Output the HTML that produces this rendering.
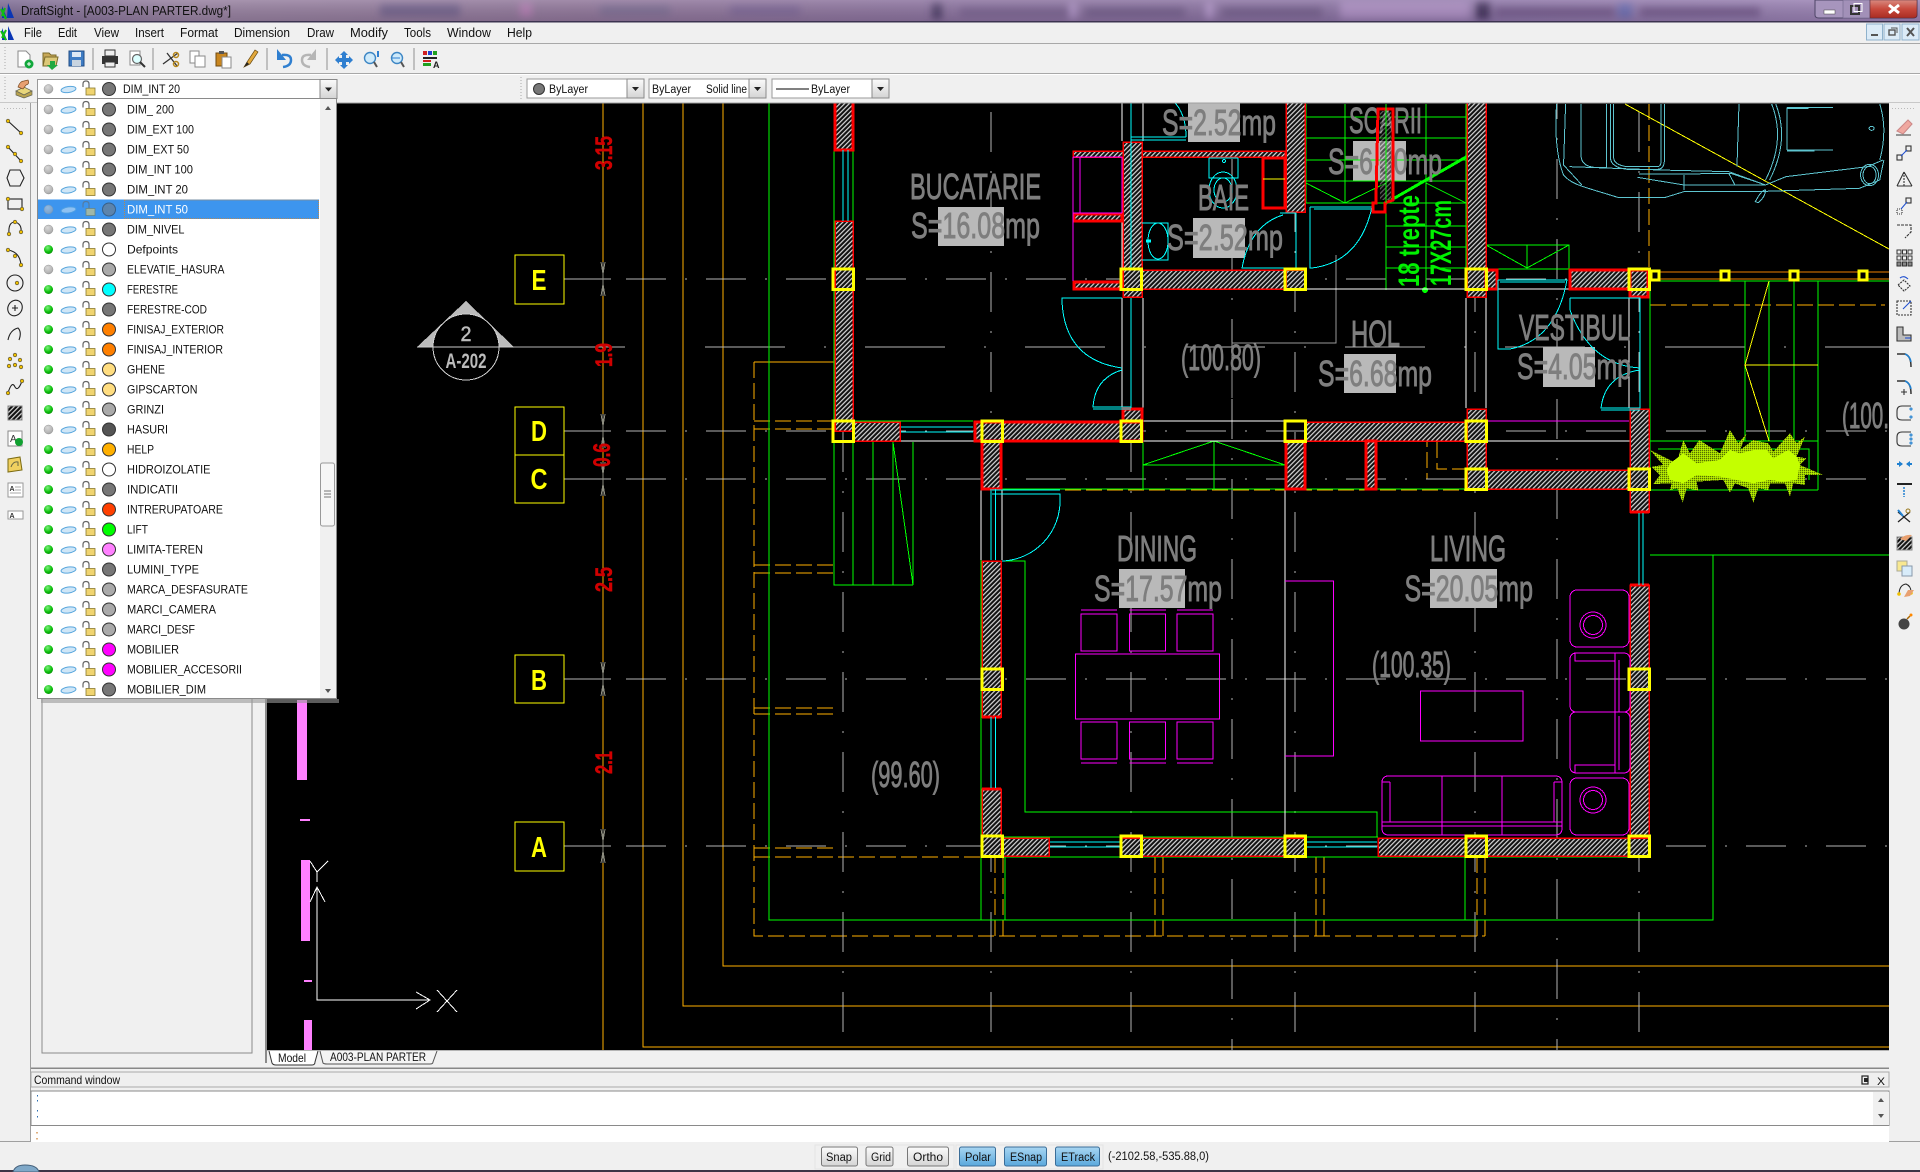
<!DOCTYPE html>
<html><head><meta charset="utf-8"><title>DraftSight</title>
<style>
html,body{margin:0;padding:0;background:#f0f0f0;overflow:hidden}
svg{display:block;position:absolute;left:0;top:0}
text{font-family:"Liberation Sans",sans-serif;white-space:pre}
.u{font-size:11.5px;fill:#111}
.g{font-size:36px;fill:#7e7e7e;stroke:#7e7e7e;stroke-width:.9}
.b{fill:#b9b9b9}
.w{fill:url(#h);stroke:#f00;stroke-width:1.5}
.W{fill:url(#h);stroke:#f00;stroke-width:3}
.c{stroke:#333;stroke-width:1}
.d{font-weight:bold;font-size:24px;fill:#d00000;stroke:#d00000;stroke-width:.5}
.ax{font-weight:bold;font-size:29px;fill:#ff0}
.n{fill:none}
.i{fill:none;stroke:#444;stroke-width:1.2}
.p{fill:#fff;stroke:#8a8a8a}
.y{fill:#f4c430;stroke:#7a6a10;stroke-width:.6}
.st{font-size:11.5px;fill:#111}
</style></head><body>
<svg width="1920" height="1172" viewBox="0 0 1920 1172" xmlns="http://www.w3.org/2000/svg">
<defs>
<filter id="bl6" x="-50%" y="-50%" width="200%" height="200%"><feGaussianBlur stdDeviation="4"/></filter>
<pattern id="h" width="3.3" height="3.3" patternUnits="userSpaceOnUse" patternTransform="rotate(45)"><rect width="3.3" height="3.3" fill="#111"/><line x1="0.6" y1="0" x2="0.6" y2="3.3" stroke="#d8d8d8" stroke-width="1.2"/></pattern>
<pattern id="chk" width="2" height="2" patternUnits="userSpaceOnUse"><rect width="2" height="2" fill="#c4ff00"/><rect width="1" height="1" fill="#000"/></pattern>
<linearGradient id="tb" x1="0" x2="1" y1="0" y2="0"><stop offset="0" stop-color="#7c6a93"/><stop offset=".1" stop-color="#96809f"/><stop offset=".3" stop-color="#8f7599"/><stop offset=".5" stop-color="#8a719e"/><stop offset=".75" stop-color="#8a72a4"/><stop offset="1" stop-color="#9a82b4"/></linearGradient>
<linearGradient id="tv" x1="0" x2="0" y1="0" y2="1"><stop offset="0" stop-color="#fff" stop-opacity=".16"/><stop offset="1" stop-color="#000" stop-opacity=".1"/></linearGradient>
<linearGradient id="cl" x1="0" x2="0" y1="0" y2="1"><stop offset="0" stop-color="#d98a80"/><stop offset=".5" stop-color="#c8493c"/><stop offset="1" stop-color="#a92c22"/></linearGradient>
<linearGradient id="bl" x1="0" x2="0" y1="0" y2="1"><stop offset="0" stop-color="#a9d6f2"/><stop offset="1" stop-color="#5aa8dc"/></linearGradient>
<linearGradient id="bg" x1="0" x2="0" y1="0" y2="1"><stop offset="0" stop-color="#fbfbfb"/><stop offset="1" stop-color="#d4d4d4"/></linearGradient>
<radialGradient id="gn" cx=".4" cy=".3" r=".8"><stop offset="0" stop-color="#7cf07c"/><stop offset=".6" stop-color="#0cbf0c"/><stop offset="1" stop-color="#067f06"/></radialGradient>
<radialGradient id="gy" cx=".4" cy=".3" r=".8"><stop offset="0" stop-color="#d8d8d8"/><stop offset=".7" stop-color="#b4b4b4"/><stop offset="1" stop-color="#8c8c8c"/></radialGradient>
<g id="ys"><rect x="-10" y="-10" width="20.5" height="20.5" fill="none" stroke="#ff0" stroke-width="3"/></g>
<g id="ic"><ellipse cx="68.5" cy="0.5" rx="7.500" ry="3" transform="rotate(-8 68.5 .5)" fill="#cfe6f7" stroke="#5aa7dd"/><path d="M83 -2V-5Q83 -8 86 -8Q89 -8 89 -5V-1" fill="none" stroke="#666" stroke-width="1.200"/><rect x="86" y="-1" width="9" height="7" fill="#f0d470" stroke="#8a7a30" stroke-width=".8"/></g>
<g id="on"><circle cx="48.500" r="4.500" fill="url(#gn)"/></g>
<g id="of"><circle cx="48.500" r="4.500" fill="url(#gy)" stroke="#999" stroke-width=".5"/></g>
<path id="tk" d="M601 -17L603 -5L605 -17M603 -17V17M601 17L603 5L605 17" fill="none" stroke="#8d8d80" stroke-width="1"/>
<symbol id="dn" overflow="visible"><rect width="17" height="19" fill="url(#bg)" stroke="#8a8a8a"/><path d="M5 8H12L8.500 12Z" fill="#222"/></symbol>
</defs>

<!-- CAD canvas -->
<rect x="267" y="103" width="1622" height="948" fill="#000"/>
<g shape-rendering="crispEdges">

<!-- orange large frames -->
<g fill="none" stroke="#ffb000" stroke-width="1">
<path d="M603 90V1050"/>
<path d="M643 90V1047H1889M683 90V1006H1889M723 90V966H1889"/>
</g>
<!-- dashed orange -->
<g fill="none" stroke="#ffb000" stroke-width="1" stroke-dasharray="16 5">
<path d="M754 362V936H1485M754 421H834M754 429H834M754 565H834M754 573H834M754 708H834M754 714H834M754 848H834M754 857H982"/>
<path d="M995 857V936M1003 857V936M1155 857V936M1163 857V936M1316 857V936M1324 857V936M1477 857V936M1485 857V936"/>
<path d="M1649 104V269M1650 305H1885M1002 490H1466"/>
<path d="M1427 431V479H1476M1427 431H1476M1437 442V469H1466"/>
</g>
<path d="M754 362H834" stroke="#ffb000" fill="none"/>

<!-- grid lines -->
<g fill="none" stroke="#b4b4b4" stroke-width="1">
<path d="M564 279H611M564 431H611M564 479H611M564 679H611M564 846H611"/>
<g stroke-dasharray="40 19 2 19">
<path d="M626 279H1889M626 431H1889M626 479H1889M626 679H1889M626 846H1889"/>
<path d="M843 32V1050M991 32V1050M1131 32V1050M1295 32V1050M1475 32V1050M1639 32V1050M1232 -1V1050M1557 -1V1050"/>
</g>
<path d="M705 347H1889" stroke-dasharray="80 39 2 39"/>
<path d="M417 347H625"/>
<path d="M1232 398V343H1336V255" stroke="#999"/>
</g>
<use href="#tk" y="279"/><use href="#tk" y="431"/><use href="#tk" y="479"/><use href="#tk" y="679"/><use href="#tk" y="846"/>

<!-- Axis boxes -->
<g fill="none" stroke="#ff0" stroke-width="1">
<rect x="515" y="255" width="49" height="49"/><rect x="515" y="407" width="49" height="48"/><rect x="515" y="455" width="49" height="48"/><rect x="515" y="655" width="49" height="48"/><rect x="515" y="822" width="49" height="49"/>
</g>
<text class="ax" x="539" y="290" text-anchor="middle" textLength="15" lengthAdjust="spacingAndGlyphs">E</text>
<text class="ax" x="539" y="441" text-anchor="middle" textLength="16" lengthAdjust="spacingAndGlyphs">D</text>
<text class="ax" x="539" y="489" text-anchor="middle" textLength="17" lengthAdjust="spacingAndGlyphs">C</text>
<text class="ax" x="539" y="690" text-anchor="middle" textLength="16" lengthAdjust="spacingAndGlyphs">B</text>
<text class="ax" x="539" y="857" text-anchor="middle" textLength="16" lengthAdjust="spacingAndGlyphs">A</text>

<!-- red dims -->
<text class="d" transform="translate(612,170) rotate(-90)" textLength="34" lengthAdjust="spacingAndGlyphs">3.15</text>
<text class="d" transform="translate(612,367) rotate(-90)" textLength="24" lengthAdjust="spacingAndGlyphs">1.9</text>
<text class="d" transform="translate(610,467) rotate(-90)" textLength="24" lengthAdjust="spacingAndGlyphs">0.6</text>
<text class="d" transform="translate(612,592) rotate(-90)" textLength="25" lengthAdjust="spacingAndGlyphs">2.5</text>
<text class="d" transform="translate(612,774) rotate(-90)" textLength="23" lengthAdjust="spacingAndGlyphs">2.1</text>

<!-- section marker -->
<path d="M466 301L417 347H514Z" fill="#bbb"/>
<circle cx="466" cy="347" r="33" fill="#000" stroke="#ccc" stroke-width="1"/>
<path d="M417 347H514" stroke="#ccc" stroke-width="1"/>
<text x="466" y="341" text-anchor="middle" font-size="21" fill="#bbb" stroke="#bbb" stroke-width=".5" textLength="11" lengthAdjust="spacingAndGlyphs">2</text>
<text x="466" y="368" text-anchor="middle" font-size="21" font-weight="bold" fill="#bbb" textLength="41" lengthAdjust="spacingAndGlyphs">A-202</text>

<!-- gray boxes -->
<g class="b">
<rect x="938" y="207" width="66" height="39"/><rect x="1188" y="100" width="52" height="42"/><rect x="1193" y="218" width="52" height="40"/>
<rect x="1353" y="141" width="53" height="40"/><rect x="1344" y="354" width="52" height="39"/><rect x="1543" y="347" width="52" height="40"/>
<rect x="1119" y="569" width="66" height="39"/><rect x="1430" y="569" width="67" height="39"/>
</g>

<!-- green lines -->
<g fill="none" stroke="#00ff00" stroke-width="1">
<path d="M769 90V920H1713V555M1650 555H1889"/>
<path d="M834 90V585H913M853 150V221M853 442V585M873 442V585M893 442V585M913 442V585M893 442L913 585"/>
<path d="M853 421H973M853 441H973"/>
<path d="M981 489H1650M981 489V857M1002 489V560M1005 857V920M1465 857V920M981 857V920"/>
<path d="M1002 561H1025V812H1377V837"/>
<path d="M981 837H1378M981 857H1650"/>
<path d="M1143 465L1214 441L1285 465ZM1214 441V490"/>
<path d="M1143 441V490"/>
<path d="M1306 117H1466M1306 138H1466M1306 160H1466M1306 181H1466M1306 203H1466M1345 104V203M1386 104V290M1426 104V203M1466 104V290M1306 104V203"/>
<path d="M1386 226H1466M1386 247H1466M1386 268H1466M1386 289H1466M1426 203V290"/>
<path d="M1306 183L1345 203L1386 183M1426 183L1466 203"/>
<path d="M1486 245H1569V269M1486 245L1527 268L1569 245M1527 245V268M1486 245V269M1486 269H1569"/>
<path d="M1650 281V490M1650 281H1889M1745 281V441M1769 281V441M1794 281V441M1818 281V490M1650 441H1818M1650 490H1818M1658 449H1809V480"/>
</g>
<path d="M1386 203L1466 157" stroke="#00ff00" stroke-width="3" fill="none"/>
<circle cx="1425" cy="290" r="3" fill="#00ff00"/>
<text transform="translate(1419,287) rotate(-90)" font-size="30" font-weight="bold" fill="#00f000" textLength="92" lengthAdjust="spacingAndGlyphs">18 trepte</text>
<text transform="translate(1451,286) rotate(-90)" font-size="30" font-weight="bold" fill="#00f000" textLength="86" lengthAdjust="spacingAndGlyphs">17X27cm</text>

<!-- yellow thin -->
<g fill="none" stroke="#ff0" stroke-width="1">
<path d="M1625 104L1889 249"/>
<path d="M1769 281L1745 365L1769 441M1745 365H1818"/>
<path d="M1263 179H1285"/>
</g>
<g fill="none" stroke="#f08000" stroke-width="1"><path d="M1650 272H1889M1650 279H1889"/></g>

<!-- white lines -->
<g fill="none" stroke="#fff" stroke-width="1">
<path d="M1122 90V141M1143 90V141M1122 298V408M1143 298V408M1466 298V408M1486 298V408M1629 298V408"/>
<path d="M834 441H1630M1143 421H1285M1306 289H1466M1486 289H1569"/>
<path d="M1285 490V837M981 490V560M1002 490V560M1122 157V269"/>
</g>
<path d="M1486 421H1629" stroke="#f0f" stroke-width="1" fill="none"/>

<!-- walls -->
<rect class="W" x="835" y="90" width="18" height="60"/>
<rect class="w" x="835" y="221" width="18" height="210"/>
<rect class="w" x="853" y="422" width="47" height="19"/>
<rect class="W" x="975" y="422" width="167" height="19"/>
<rect class="W" x="982" y="441" width="19" height="48"/>
<rect class="w" x="1073" y="151" width="212" height="6"/>
<rect class="w" x="1123" y="142" width="19" height="155"/>
<rect class="W" x="1074" y="214" width="48" height="7"/>
<rect class="W" x="1074" y="282" width="48" height="7"/>
<rect class="w" x="1142" y="270" width="144" height="19"/>
<rect class="W" x="1123" y="409" width="19" height="13"/>
<rect x="1263" y="158" width="22" height="50" fill="#000" stroke="#f00" stroke-width="3"/>
<path d="M1263 179H1285" stroke="#ff0"/>
<rect class="w" x="1286" y="90" width="19" height="122"/>
<rect class="w" x="1286" y="270" width="19" height="19"/>
<rect class="W" x="1286" y="441" width="19" height="48"/>
<rect class="w" x="1306" y="422" width="160" height="19"/>
<rect class="W" x="1366" y="441" width="10" height="48"/>
<rect class="w" x="1467" y="90" width="19" height="207"/>
<rect class="w" x="1467" y="409" width="19" height="80"/>
<rect class="W" x="1486" y="270" width="11" height="19"/>
<rect class="W" x="1570" y="270" width="78" height="19"/>
<rect class="W" x="1630" y="270" width="18" height="27"/>
<rect class="w" x="1630" y="409" width="19" height="103"/>
<rect class="w" x="1630" y="585" width="19" height="271"/>
<rect class="w" x="1486" y="470" width="144" height="19"/>
<rect class="w" x="982" y="561" width="19" height="156"/>
<rect class="w" x="982" y="789" width="19" height="68"/>
<rect class="w" x="1002" y="838" width="47" height="18"/>
<rect class="w" x="1121" y="838" width="185" height="18"/>
<rect class="w" x="1378" y="838" width="271" height="18"/>
<path d="M982 717H1001M982 789H1001M1630 512H1649M1630 585H1649" stroke="#f00" stroke-width="3"/>

<!-- magenta kitchen -->
<path d="M1073 157V281M1080 157V213M1073 157H1122M1073 213H1122" stroke="#f0f" fill="none" stroke-width="1"/>
<path d="M1122 157V213" stroke="#f0f"/>

<!-- cyan -->
<g fill="none" stroke="#0ff" stroke-width="1">
<path d="M843 150V221M848 150V221M901 427H973M901 432H973"/>
<path d="M1050 842H1121M1050 847H1121M1306 842H1377M1306 847H1377M991 717V788M995.500 717V788M991 489V560M995.500 489V560M1639 513V585M1643 513V585"/>
<path d="M992 490H1060M992 494H1060V500A60 60 0 0 1 1002 561"/>
<path d="M1131 90V269M1122 298H1062V302Q1065 360 1122 368M1131 298V408M1122 370Q1095 378 1093 407H1131M1093 409H1131"/>
<path d="M1131 137H1186M1131 140H1186M1186 137Q1186 112 1172 100"/>
<path d="M1209 158V178H1238V158M1209 158H1238"/>
<ellipse cx="1223" cy="190" rx="14" ry="18"/><ellipse cx="1223" cy="190" rx="9" ry="12"/><circle cx="1224" cy="161" r="1.500"/>
<path d="M1142 223H1168V260H1142"/><ellipse cx="1158" cy="241" rx="10" ry="18"/><path d="M1146 241H1151" stroke-width="3"/>
<path d="M1283 215Q1250 225 1242 268H1283"/>
<path d="M1310 207H1372Q1360 262 1312 268H1310V207M1314 209H1372"/>
<path d="M1280 213H1296V268H1280"/>
<path d="M1498 280H1567Q1556 340 1510 349H1498V280M1500 282H1565"/>
<path d="M1570 298H1640V408H1601Q1605 375 1640 370M1570 298V310Q1590 365 1640 368M1601 410H1640"/>
</g>

<!-- car -->
<g transform="translate(1280,90) scale(.408,.3333)" fill="none" stroke="#5ec5d0">
<path vector-effect="non-scaling-stroke" d="M678 42C672 130 680 210 695 255C715 285 745 290 830 323L945 322L990 305L1165 305L1420 295L1470 270L1480 210"/>
<path vector-effect="non-scaling-stroke" d="M700 42L695 225L740 285"/>
<path vector-effect="non-scaling-stroke" d="M738 42V200Q740 228 770 232H800V42"/>
<path vector-effect="non-scaling-stroke" d="M810 42V205Q812 232 850 238H925Q940 238 942 215V42M818 42V205Q820 225 850 230H925Q933 230 934 215V42"/>
<path vector-effect="non-scaling-stroke" d="M710 230L930 240L1100 245L1190 285"/>
<path vector-effect="non-scaling-stroke" d="M880 252H990L1105 250L1190 285L1240 260L1440 230L1478 210"/>
<path vector-effect="non-scaling-stroke" d="M876 262L990 285H1190M990 255V300M1100 250L1115 285"/>
<path vector-effect="non-scaling-stroke" d="M1125 42L1120 230M1205 42Q1240 150 1190 270M1215 42Q1250 150 1200 270"/>
<path vector-effect="non-scaling-stroke" d="M1243 52H1355M1243 55H1295M1243 180H1355M1243 183H1310M1243 52V180"/>
<ellipse vector-effect="non-scaling-stroke" cx="1445" cy="255" rx="22" ry="32"/><ellipse vector-effect="non-scaling-stroke" cx="1445" cy="255" rx="16" ry="26"/>
<path vector-effect="non-scaling-stroke" d="M1470 42Q1490 120 1470 210"/>
<path vector-effect="non-scaling-stroke" d="M1165 335Q1180 300 1190 300Q1190 320 1172 338Z"/>
<circle vector-effect="non-scaling-stroke" cx="1450" cy="115" r="6"/>
</g>

<!-- magenta furniture -->
<g fill="none" stroke="#f0f" stroke-width="1">
<path d="M1081 610H1117M1129.500 610H1166M1177 610H1213M1081 763H1117M1129.500 763H1166M1177 763H1213"/>
<rect x="1081" y="614" width="36" height="37"/><rect x="1129.500" y="614" width="36" height="37"/><rect x="1177" y="614" width="36" height="37"/>
<rect x="1075.500" y="654" width="144" height="65"/>
<rect x="1081" y="722" width="36" height="37"/><rect x="1129.500" y="722" width="36" height="37"/><rect x="1177" y="722" width="36" height="37"/>
<path d="M1285 581H1333.500V756H1285"/>
<rect x="1420.500" y="691" width="102.500" height="50"/>
<rect x="1570" y="590" width="59" height="57" rx="7"/><circle cx="1593" cy="625" r="13"/><circle cx="1593" cy="625" r="9.500"/>
<rect x="1570" y="778" width="59" height="57" rx="7"/><circle cx="1593" cy="800" r="13"/><circle cx="1593" cy="800" r="9.500"/>
<rect x="1570" y="653" width="60" height="59" rx="6"/><rect x="1570" y="712" width="60" height="61" rx="6"/>
<path d="M1575 653V661H1615V653M1575 773V765H1615V773M1615 653V773M1619 660V712M1619 716V770"/>
<rect x="1382" y="776" width="180" height="59" rx="6"/>
<path d="M1442 776V835M1502 776V835M1382 822H1562M1382 826H1562M1390 782V822M1554 782V822M1382 782H1390M1554 782H1562"/>
</g>

<!-- room text -->
<text class="g" x="910" y="199" textLength="131" lengthAdjust="spacingAndGlyphs">BUCATARIE</text>
<text class="g" x="911" y="238" textLength="129" lengthAdjust="spacingAndGlyphs">S=16.08mp</text>
<text class="g" x="1162" y="135" textLength="114" lengthAdjust="spacingAndGlyphs">S=2.52mp</text>
<text class="g" x="1198" y="210" textLength="51" lengthAdjust="spacingAndGlyphs">BAIE</text>
<text class="g" x="1167" y="250" textLength="116" lengthAdjust="spacingAndGlyphs">S=2.52mp</text>
<text class="g" x="1181" y="370" textLength="80" lengthAdjust="spacingAndGlyphs">(100.80)</text>
<text class="g" x="1349" y="133" textLength="73" lengthAdjust="spacingAndGlyphs">SCARII</text>
<text class="g" x="1328" y="174" textLength="114" lengthAdjust="spacingAndGlyphs">S=6.30mp</text>
<text class="g" x="1351" y="346" textLength="49" lengthAdjust="spacingAndGlyphs">HOL</text>
<text class="g" x="1318" y="386" textLength="114" lengthAdjust="spacingAndGlyphs">S=6.68mp</text>
<text class="g" x="1519" y="340" textLength="111" lengthAdjust="spacingAndGlyphs">VESTIBUL</text>
<text class="g" x="1517" y="379" textLength="114" lengthAdjust="spacingAndGlyphs">S=4.05mp</text>
<text class="g" x="1842" y="428" textLength="47" lengthAdjust="spacingAndGlyphs">(100.</text>
<text class="g" x="1117" y="561" textLength="80" lengthAdjust="spacingAndGlyphs">DINING</text>
<text class="g" x="1094" y="601" textLength="128" lengthAdjust="spacingAndGlyphs">S=17.57mp</text>
<text class="g" x="1430" y="561" textLength="76" lengthAdjust="spacingAndGlyphs">LIVING</text>
<text class="g" x="1404.500" y="601" textLength="128.500" lengthAdjust="spacingAndGlyphs">S=20.05mp</text>
<text class="g" x="1372" y="677" textLength="79" lengthAdjust="spacingAndGlyphs">(100.35)</text>
<text class="g" x="871" y="787" textLength="69" lengthAdjust="spacingAndGlyphs">(99.60)</text>

<!-- red stair column over text -->
<path d="M1378 109H1393V200L1385 203V212H1373V203H1376V200Z" fill="none" stroke="#f00" stroke-width="3"/>
<path d="M1380 111H1391V200H1380Z" fill="url(#h)" opacity=".45"/>
<path d="M1386 104V203" stroke="#00ff00"/>

<!-- yellow squares -->
<use href="#ys" x="843" y="279"/><use href="#ys" x="1131" y="279"/><use href="#ys" x="1295" y="279"/><use href="#ys" x="1476" y="279"/><use href="#ys" x="1639" y="279"/>
<use href="#ys" x="843" y="431"/><use href="#ys" x="992" y="431"/><use href="#ys" x="1131" y="431"/><use href="#ys" x="1295" y="431"/><use href="#ys" x="1476" y="431"/>
<use href="#ys" x="1476" y="479"/><use href="#ys" x="1639" y="479"/><use href="#ys" x="992" y="679"/><use href="#ys" x="1639" y="679"/>
<use href="#ys" x="992" y="846"/><use href="#ys" x="1131" y="846"/><use href="#ys" x="1295" y="846"/><use href="#ys" x="1476" y="846"/><use href="#ys" x="1639" y="846"/>
<g fill="#000" stroke="#ff0" stroke-width="3"><rect x="1651" y="271" width="8" height="9"/><rect x="1721" y="271" width="8" height="9"/><rect x="1790" y="271" width="8" height="9"/><rect x="1859" y="271" width="8" height="9"/></g>

<!-- plants -->
<g transform="translate(1640,420) scale(.3333)">
<polygon fill="url(#chk)" points="30,90 110,130 130,60 150,100 178,60 240,100 270,30 295,70 320,40 300,90 340,60 385,70 400,95 450,40 470,70 495,50 470,110 500,115 480,135 550,165 495,165 495,195 460,190 450,230 435,190 390,190 385,210 355,205 340,248 325,205 285,190 270,218 250,180 170,185 175,212 140,205 128,248 112,205 90,210 95,190 40,192 60,165 35,140 70,135"/>
<polygon fill="#c4ff00" points="90,130 130,100 170,130 240,120 270,90 300,100 340,90 380,90 400,115 445,90 470,110 480,135 470,180 430,185 390,180 340,190 290,180 240,170 170,165 130,190 90,180 80,150"/>
</g>

<!-- pink limit lines -->
<g fill="#ff80ff">
<rect x="297" y="700" width="10" height="80"/><rect x="300" y="819" width="10" height="2"/><rect x="301" y="860" width="9" height="81"/><rect x="304" y="980" width="8" height="2"/><rect x="304" y="1020" width="8" height="30"/>
</g>
<!-- UCS -->
<g fill="none" stroke="#fff" stroke-width="1">
<path d="M317 887V1000H430M310 902L317 887L325 902M416 992L430 1000L416 1009"/>
<path d="M437 990L457 1012M457 990L437 1012M310 861L317 872L328 861M317 872V882"/>
</g>
</g>

<!-- ====== UI chrome ====== -->
<rect x="0" y="0" width="1920" height="22" fill="url(#tb)"/>
<g filter="url(#bl6)">
<rect x="380" y="4" width="80" height="12" fill="#6f5f8a"/><rect x="520" y="3" width="12" height="14" fill="#b07ab0"/>
<rect x="600" y="5" width="70" height="10" fill="#7a6a92"/><rect x="730" y="5" width="70" height="10" fill="#7a6494"/>
<rect x="932" y="3" width="10" height="16" fill="#4c3a66"/><rect x="960" y="7" width="110" height="9" fill="#775f8e"/>
<rect x="1070" y="3" width="6" height="16" fill="#b79ad0"/><rect x="1085" y="7" width="100" height="9" fill="#705a88"/>
<rect x="1206" y="3" width="7" height="16" fill="#b79ad0"/><rect x="1222" y="7" width="100" height="9" fill="#705a88"/>
<rect x="1340" y="2" width="130" height="17" fill="#ab8cc2"/>
<rect x="1476" y="2" width="14" height="17" fill="#3f2f5a"/><rect x="1495" y="7" width="120" height="9" fill="#6f5488"/>
<rect x="1618" y="3" width="14" height="15" fill="#6a6ab0"/><rect x="1640" y="7" width="120" height="9" fill="#6f5488"/>
</g>
<rect x="0" y="0" width="1920" height="21" fill="url(#tv)"/>
<rect x="0" y="21" width="1920" height="1.500" fill="#3c3350"/>
<path d="M2 6L7 18H2ZM8 3L14 18H7Z" fill="#0a35b5"/><path d="M1 9L6 19M5 8L2 16" stroke="#10c010" stroke-width="2" fill="none"/>
<text x="21" y="15" font-size="12.500" fill="#111" textLength="210" lengthAdjust="spacingAndGlyphs">DraftSight - [A003-PLAN PARTER.dwg*]</text>
<g>
<path d="M1815 0H1917V15Q1917 18 1913 18H1819Q1815 18 1815 15Z" fill="#a795bd" stroke="#4e4566" stroke-width="1"/>
<rect x="1843" y="0" width="27" height="18" fill="#a290b8" stroke="#6f6688" stroke-width=".6"/>
<path d="M1870 0H1917V15Q1917 18 1913 18H1870Z" fill="url(#cl)" stroke="#5a2a3a" stroke-width=".6"/>
<rect x="1824" y="10" width="11" height="4" fill="#fff" stroke="#444" stroke-width=".5"/>
<rect x="1851" y="6" width="8" height="8" fill="none" stroke="#333" stroke-width="2"/><rect x="1854" y="3.500" width="8" height="8" fill="none" stroke="#fff" stroke-width="1"/>
<path d="M1889 5L1899 13M1899 5L1889 13" stroke="#fff" stroke-width="3"/>
</g>

<!-- menu row -->
<rect x="0" y="22.500" width="1920" height="21" fill="#f0f0f0"/>
<rect x="0" y="43" width="1920" height="1" fill="#a8a8a8"/>
<path d="M2 28L7 40H2ZM8 26L14 40H8Z" fill="#0a35b5"/><path d="M1 31L6 40M6 30L2 38" stroke="#10c010" stroke-width="2" fill="none"/>
<g font-size="12.500" fill="#111">
<text x="24" y="37" textLength="18" lengthAdjust="spacingAndGlyphs">File</text><text x="58" y="37" textLength="19" lengthAdjust="spacingAndGlyphs">Edit</text><text x="94" y="37" textLength="25" lengthAdjust="spacingAndGlyphs">View</text><text x="135" y="37" textLength="29" lengthAdjust="spacingAndGlyphs">Insert</text><text x="180" y="37" textLength="38" lengthAdjust="spacingAndGlyphs">Format</text><text x="234" y="37" textLength="56" lengthAdjust="spacingAndGlyphs">Dimension</text><text x="307" y="37" textLength="27" lengthAdjust="spacingAndGlyphs">Draw</text><text x="350" y="37" textLength="38" lengthAdjust="spacingAndGlyphs">Modify</text><text x="404" y="37" textLength="27" lengthAdjust="spacingAndGlyphs">Tools</text><text x="447" y="37" textLength="44" lengthAdjust="spacingAndGlyphs">Window</text><text x="507" y="37" textLength="25" lengthAdjust="spacingAndGlyphs">Help</text>
</g>
<g fill="#dcebf7" stroke="#8fb2cc"><rect x="1866.500" y="24" width="16" height="16"/><rect x="1884" y="24" width="16" height="16"/><rect x="1902" y="24" width="17" height="16"/></g>
<path d="M1871 35H1878" stroke="#555" stroke-width="2"/><rect x="1889" y="30" width="6" height="5" fill="none" stroke="#555" stroke-width="1.400"/><path d="M1891 28H1897V33" fill="none" stroke="#555"/><path d="M1907 28L1914 36M1914 28L1907 36" stroke="#555" stroke-width="2"/>

<!-- toolbar rows -->
<rect x="0" y="44" width="1920" height="59" fill="#f0f0f0"/>
<rect x="0" y="73" width="1920" height="1" fill="#a8a8a8"/><rect x="0" y="74" width="1920" height="1" fill="#fff"/>
<rect x="0" y="102.500" width="1920" height="1" fill="#a0a0a0"/>
<path d="M5 47V71M5 77V101M521 77V101" stroke="#aaa" stroke-dasharray="1 2" fill="none"/>
<path d="M93 48V70M153 48V70M267 48V70M327 48V70M414 48V70" stroke="#909090"/>
<!-- new -->
<path class="p" d="M18 51H26L30 55V67H18Z"/><circle cx="29" cy="64" r="4.500" fill="#12a83c"/><path d="M27 64H31M29 62V66" stroke="#fff"/>
<!-- open -->
<path d="M43 53H49L51 55H56V66H43Z" fill="#c8a858" stroke="#7a6a2a"/><path d="M45 57H58L56 66H43Z" fill="#dcc878" stroke="#7a6a2a"/><path d="M50 61H55V65H58L52 70L47 65H50Z" fill="#20a840"/>
<!-- save -->
<rect x="69" y="51" width="15" height="15" fill="#3e7cc4" stroke="#204c84"/><rect x="72" y="52" width="9" height="5" fill="#dce8f5"/><rect x="72" y="60" width="9" height="6" fill="#c8d4e0"/>
<!-- print -->
<rect x="105" y="50" width="10" height="6" fill="#eee" stroke="#333"/><rect x="102" y="56" width="16" height="8" fill="#333"/><rect x="105" y="62" width="10" height="5" fill="#eee" stroke="#333"/>
<!-- preview -->
<path class="p" d="M130 51H140V65H130Z"/><circle cx="137" cy="59" r="4.500" fill="#dff" stroke="#666" stroke-width="1.200"/><path d="M140 62L145 67" stroke="#333" stroke-width="2"/>
<!-- cut -->
<path d="M163 64L178 53M177 66L167 53" stroke="#333" stroke-width="1.300" fill="none"/><circle cx="176" cy="55" r="2.500" fill="none" stroke="#b8881a" stroke-width="1.500"/><circle cx="176" cy="64" r="2.500" fill="none" stroke="#b8881a" stroke-width="1.500"/>
<!-- copy -->
<rect class="p" x="190" y="51" width="9" height="12"/><rect class="p" x="195" y="56" width="10" height="11"/>
<!-- paste -->
<rect x="216" y="53" width="11" height="13" fill="#c9861f" stroke="#6f4a10"/><rect x="219" y="51" width="5" height="3" fill="#555"/><rect class="p" x="222" y="57" width="9" height="11"/>
<!-- brush -->
<path d="M244 67L247 62L255 50L258 52L250 64Z" fill="#e2a83c" stroke="#6a4a10" stroke-width=".7"/><path d="M244 67L247 62L249 64Z" fill="#222"/>
<!-- undo -->
<path d="M282 55Q291 54 291 60Q291 66 283 67" fill="none" stroke="#2f7fd0" stroke-width="2.500"/><path d="M277 49V60H286Z" fill="#2f7fd0"/>
<!-- redo -->
<path d="M311 55Q302 54 302 60Q302 66 310 67" fill="none" stroke="#b5b5b5" stroke-width="2.500"/><path d="M316 49V60H307Z" fill="#b5b5b5"/>
<!-- pan -->
<path d="M344 51L348 55H346V58H349V56L353 60L349 64V62H346V65H348L344 69L340 65H342V62H339V64L335 60L339 56V58H342V55H340Z" fill="#2f7fd0"/>
<!-- zoom -->
<circle cx="370" cy="58" r="5.500" fill="#cfeafa" stroke="#3d86c4" stroke-width="1.400"/><path d="M374 62L377 67" stroke="#555" stroke-width="2"/><path d="M378 51V57" stroke="#2f7fd0" stroke-width="2"/>
<circle cx="397" cy="58" r="5.500" fill="#cfeafa" stroke="#3d86c4" stroke-width="1.400"/><path d="M401 62L404 67" stroke="#555" stroke-width="2"/><path d="M392 58H400" stroke="#2f7fd0"/>
<!-- layer color -->
<g><rect x="423" y="51" width="4" height="4" fill="#d02020"/><rect x="428" y="51" width="4" height="4" fill="#2040d0"/><rect x="433" y="51" width="4" height="4" fill="#20a020"/><rect x="423" y="57" width="14" height="2" fill="#222"/><rect x="423" y="60" width="8" height="2" fill="#d02020"/><rect x="423" y="63" width="8" height="3" fill="#20a020"/></g>
<text x="433" y="68" font-size="9" font-weight="bold" fill="#222">A</text>
<!-- layer mgr icon -->
<path d="M16 91L24 87L32 91L24 95Z" fill="#e8d67a" stroke="#665" stroke-width=".7"/><path d="M16 91V95L24 98L32 95V91L24 95Z" fill="#b8a24e" stroke="#665" stroke-width=".7"/><path d="M18 87Q20 81 24 81L28 80Q30 84 26 85L23 89Z" fill="#e8a070" stroke="#7a4a20" stroke-width=".7"/>
<!-- Bylayer combos -->
<rect x="527" y="79" width="116" height="19" fill="#fff" stroke="#9a9a9a"/><circle cx="539" cy="89" r="5.500" fill="#777" stroke="#333"/>
<text class="u" x="549" y="93" textLength="39" lengthAdjust="spacingAndGlyphs">ByLayer</text><use href="#dn" x="627" y="79"/>
<rect x="649" y="79" width="116" height="19" fill="#fff" stroke="#9a9a9a"/>
<text class="u" x="652" y="93" textLength="39" lengthAdjust="spacingAndGlyphs">ByLayer</text><text class="u" x="706" y="93" textLength="41" lengthAdjust="spacingAndGlyphs">Solid line</text><use href="#dn" x="749" y="79"/>
<rect x="772" y="79" width="116" height="19" fill="#fff" stroke="#9a9a9a"/><path d="M776 89H809" stroke="#000"/>
<text class="u" x="811" y="93" textLength="39" lengthAdjust="spacingAndGlyphs">ByLayer</text><use href="#dn" x="872" y="79"/>

<!-- left panels -->
<rect x="0" y="103" width="267" height="1039" fill="#f0f0f0"/>
<rect x="30" y="103" width="1" height="1039" fill="#a0a0a0"/>
<rect x="42" y="100" width="210" height="953" fill="#f0f0f0" stroke="#8a8a8a"/>
<rect x="265" y="103" width="2" height="960" fill="#8a8a8a"/>
<path d="M4 108.500H27" stroke="#bbb" stroke-dasharray="1 2"/>
<!-- left tool icons -->
<g fill="none" stroke="#222" stroke-width="1.100">
<path d="M8 121L21 133"/><path d="M8 147L21 161"/><path d="M15 170H20L24 178L20 186H10L7 178L10 170Z"/><rect x="8" y="199" width="14" height="10"/><path d="M9 234Q8 222 15 222Q22 224 21 232"/><path d="M8 250Q20 252 21 265"/><circle cx="15" cy="283" r="8"/><ellipse cx="15" cy="308" rx="7" ry="8" transform="rotate(30 15 308)"/><path d="M15 305V311M12 308H18"/><path d="M8 340Q10 330 18 328Q22 332 19 340"/><path d="M8 393Q12 380 15 387Q18 392 22 381"/>
</g>
<g fill="#f0c000" stroke="#444" stroke-width=".6"><circle cx="8" cy="121" r="1.800"/><circle cx="21" cy="133" r="1.800"/><circle cx="8" cy="147" r="1.800"/><circle cx="15" cy="154" r="1.800"/><circle cx="21" cy="161" r="1.800"/><circle cx="8" cy="199" r="1.800"/><circle cx="22" cy="209" r="1.800"/><circle cx="9" cy="234" r="1.800"/><circle cx="15" cy="222" r="1.800"/><circle cx="21" cy="232" r="1.800"/><circle cx="8" cy="250" r="1.800"/><circle cx="15" cy="256" r="1.800"/><circle cx="21" cy="265" r="1.800"/><circle cx="17" cy="283" r="1.800"/><circle cx="10" cy="359" r="1.800"/><circle cx="15" cy="355" r="1.800"/><circle cx="20" cy="360" r="1.800"/><circle cx="9" cy="366" r="1.800"/><circle cx="15" cy="365" r="1.800"/><circle cx="21" cy="367" r="1.800"/><circle cx="8" cy="393" r="1.800"/><circle cx="22" cy="381" r="1.800"/></g>
<rect x="8" y="406" width="14" height="14" fill="url(#h)" stroke="#888"/>
<rect x="8" y="431" width="14" height="15" fill="#fff" stroke="#888"/><text x="10" y="442" font-size="10" fill="#333">A</text><circle cx="19" cy="442" r="4" fill="#10a030"/>
<path d="M8 459L20 457L22 470L8 472Z" fill="#f0d060" stroke="#7a6a10"/><path d="M11 467Q13 461 18 462V466" fill="none" stroke="#664"/>
<rect x="8" y="483" width="15" height="14" fill="#fff" stroke="#999"/><text x="9.500" y="491" font-size="7" font-weight="bold" fill="#333">A</text><path d="M15 487H21M15 490H21M10 493H21" stroke="#aaa"/>
<rect x="8" y="511" width="15" height="8" fill="#fff" stroke="#999"/><text x="9.500" y="518" font-size="7" font-weight="bold" fill="#333">A</text>

<!-- right toolbar -->
<rect x="1889" y="103" width="31" height="1039" fill="#f0f0f0"/>
<rect x="1889" y="1141" width="31" height="1" fill="#a0a0a0"/>
<path d="M1892 108.500H1916" stroke="#bbb" stroke-dasharray="1 2"/>
<g fill="none" stroke="#333" stroke-width="1.100">
<path d="M1897 131L1908 120L1912 124L1903 134Z" fill="#f0a8a0" stroke="#c88"/><path d="M1896 135H1911" stroke="#777" stroke-width="1.500"/>
<rect x="1897" y="155" width="5" height="5"/><rect x="1906" y="146" width="5" height="5"/><path d="M1901 156L1907 150" stroke="#2050d0"/>
<path d="M1897 186H1912M1904 172L1897 186M1904 172L1912 186" /><path d="M1904 172V186" stroke-dasharray="2 1"/>
<rect x="1897" y="209" width="5" height="5" stroke-dasharray="1 1"/><rect x="1906" y="198" width="5" height="5"/><path d="M1901 209L1907 202" stroke="#2050d0"/>
<path d="M1897 225H1911V232L1905 238" stroke-dasharray="3 1"/>
</g>
<g fill="none" stroke="#333"><rect x="1897" y="250" width="4" height="4"/><rect x="1902.500" y="250" width="4" height="4"/><rect x="1908" y="250" width="4" height="4"/><rect x="1897" y="256" width="4" height="4"/><rect x="1902.500" y="256" width="4" height="4"/><rect x="1908" y="256" width="4" height="4"/><rect x="1897" y="262" width="4" height="4" fill="#888"/><rect x="1902.500" y="262" width="4" height="4" fill="#888"/><rect x="1908" y="262" width="4" height="4" fill="#888"/></g>
<g fill="none" stroke="#333" stroke-width="1.100">
<path d="M1898 285L1904 280L1910 286L1904 291Z" stroke-dasharray="2 1"/><path d="M1900 278Q1904 275 1908 279" stroke="#2050d0"/>
<rect x="1897" y="301" width="14" height="14" stroke-dasharray="2 1"/><path d="M1903 309L1911 301" stroke="#2050d0"/>
<path d="M1897 327H1903V335H1911V341H1897Z" fill="#bbb"/><path d="M1905 338H1911" stroke="#2050d0"/>
<path d="M1897 354H1905Q1911 356 1911 367" stroke-width="1.500"/><path d="M1905 354Q1910 356 1911 362" stroke="#2080d0" stroke-width="1.500"/>
<path d="M1897 381H1905Q1911 383 1911 394" stroke-width="1.500"/><path d="M1905 381Q1910 383 1911 389" stroke="#2080d0" stroke-width="1.500"/><path d="M1904 389V395M1901 392H1907"/>
<path d="M1911 406H1902Q1897 406 1897 411V416Q1897 420 1902 420H1911"/><circle cx="1911" cy="409" r="1" stroke="#2080d0"/><circle cx="1911" cy="417" r="1" stroke="#2080d0"/>
<path d="M1911 432H1902Q1897 432 1897 437V442Q1897 446 1902 446H1911"/><circle cx="1911" cy="435" r="1" stroke="#2080d0"/><circle cx="1911" cy="439" r="1" stroke="#2080d0"/><circle cx="1911" cy="443" r="1" stroke="#2080d0"/>
</g>
<path d="M1897 464H1902M1907 464H1912" stroke="#2080d0" stroke-width="2"/><path d="M1899 461L1903 464L1899 467ZM1910 461L1906 464L1910 467Z" fill="#2080d0"/>
<path d="M1897 484H1912" stroke="#222" stroke-width="2"/><path d="M1904 487V497" stroke="#2080d0" stroke-dasharray="2 1" stroke-width="1.500"/>
<path d="M1898 512L1910 522M1910 512L1898 522" stroke="#222" stroke-width="1.300"/><path d="M1898 510L1903 516" stroke="#2080d0" stroke-width="2"/><circle cx="1908" cy="511" r="2" fill="none" stroke="#9a7a20"/>
<rect x="1897" y="537" width="15" height="13" fill="url(#h)" stroke="#888"/><path d="M1900 539Q1905 534 1912 535L1906 541Z" fill="#e8a070"/>
<rect x="1897" y="561" width="10" height="10" fill="#f8e890" stroke="#aa9"/><rect x="1902" y="566" width="10" height="10" fill="#d8ecfa" stroke="#89a"/>
<path d="M1899 595Q1899 585 1906 584Q1911 586 1911 592" fill="none" stroke="#222"/><circle cx="1899" cy="594" r="1.800" fill="#f0c000"/><circle cx="1911" cy="593" r="1.800" fill="#f0c000"/><path d="M1904 597L1908 590L1914 590L1910 596Z" fill="#e8a070"/>
<circle cx="1904" cy="624" r="5.500" fill="#444"/><path d="M1907 619L1910 616" stroke="#a60" stroke-width="1.500"/><circle cx="1911" cy="615" r="1.500" fill="#f80"/>

<!-- tabs -->
<rect x="267" y="1050" width="1622" height="17" fill="#f0f0f0"/>
<rect x="267" y="1050" width="1622" height="1" fill="#777" opacity=".5"/>
<path d="M269 1051L272 1063Q273 1065 276 1065H312Q315 1065 315 1062L318 1051" fill="#fff" stroke="#333"/>
<path d="M320 1051L323 1063Q324 1064 327 1064H430Q433 1064 433 1062L437 1051" fill="#f4f4f4" stroke="#555"/>
<text x="278" y="1062" font-size="12" fill="#111" textLength="28" lengthAdjust="spacingAndGlyphs">Model</text>
<text x="330" y="1061" font-size="12" fill="#111" textLength="96" lengthAdjust="spacingAndGlyphs">A003-PLAN PARTER</text>

<!-- command window -->
<rect x="0" y="1067" width="1920" height="105" fill="#f0f0f0"/>
<rect x="30" y="103" width="1" height="1039" fill="#a0a0a0"/>
<rect x="0" y="1141" width="31" height="1" fill="#a0a0a0"/>
<rect x="1889" y="1141" width="31" height="1" fill="#a0a0a0"/>
<rect x="31" y="1067.500" width="1858" height="1.500" fill="#888"/>
<rect x="31" y="1072" width="1858" height="15" fill="#efefef" stroke="#aaa"/>
<text x="34" y="1084" font-size="12" fill="#111" textLength="86" lengthAdjust="spacingAndGlyphs">Command window</text>
<rect x="31" y="1091" width="1858" height="34.500" fill="#fff" stroke="#8a8a8a"/>
<rect x="31" y="1126" width="1858" height="16" fill="#fff"/>
<rect x="1873" y="1092" width="16" height="33" fill="#f0f0f0"/>
<path d="M1878 1102H1884L1881 1098ZM1878 1114H1884L1881 1118Z" fill="#555"/>
<g fill="#2a6cb0"><rect x="37" y="1095" width="1" height="1.500"/><rect x="37" y="1100" width="1" height="1.500"/><rect x="37" y="1110" width="1" height="1.500"/><rect x="37" y="1116" width="1" height="1.500"/></g>
<g fill="#c06000"><rect x="36.500" y="1132" width="1" height="1.500"/><rect x="36.500" y="1138" width="1" height="1.500"/></g>
<rect x="1862" y="1076" width="6" height="8" fill="none" stroke="#222" stroke-width="1.200"/><rect x="1864" y="1078" width="4" height="4" fill="#222"/>
<text x="1877" y="1085" font-size="11" fill="#111" textLength="8" lengthAdjust="spacingAndGlyphs">X</text>

<!-- status bar -->
<rect x="815" y="1145" width="139" height="24" fill="none" stroke="#e4e4e4"/><rect x="956" y="1145" width="147" height="24" fill="none" stroke="#e4e4e4"/>
<g stroke="#777" stroke-width="1">
<rect x="821.500" y="1147" width="36" height="19" rx="2" fill="url(#bg)"/><rect x="866" y="1147" width="27" height="19" rx="2" fill="url(#bg)"/><rect x="907.500" y="1147" width="41" height="19" rx="2" fill="url(#bg)"/>
<rect x="959.500" y="1147" width="36" height="19" rx="2" fill="url(#bl)" stroke="#3a6d98"/><rect x="1004.500" y="1147" width="42" height="19" rx="2" fill="url(#bl)" stroke="#3a6d98"/><rect x="1055.500" y="1147" width="44" height="19" rx="2" fill="url(#bl)" stroke="#3a6d98"/>
</g>
<text class="st" x="826" y="1161" textLength="26" lengthAdjust="spacingAndGlyphs">Snap</text><text class="st" x="871" y="1161" textLength="20" lengthAdjust="spacingAndGlyphs">Grid</text><text class="st" x="913" y="1161" textLength="30" lengthAdjust="spacingAndGlyphs">Ortho</text><text class="st" x="965" y="1161" textLength="26" lengthAdjust="spacingAndGlyphs">Polar</text><text class="st" x="1010" y="1161" textLength="32" lengthAdjust="spacingAndGlyphs">ESnap</text><text class="st" x="1061" y="1161" textLength="34" lengthAdjust="spacingAndGlyphs">ETrack</text>
<text class="st" x="1108" y="1160" textLength="101" lengthAdjust="spacingAndGlyphs">(-2102.58,-535.88,0)</text>
<rect x="0" y="1170" width="1920" height="2" fill="#3c3446"/>
<path d="M13 1172Q15 1165 25 1165Q37 1165 39 1172Z" fill="#7fa8c8" stroke="#44607a"/>

<!-- Layer combo -->
<rect x="37.500" y="79.500" width="299" height="19" fill="#fff" stroke="#9a9a9a"/>
<g transform="translate(0,89)"><use href="#of"/><use href="#ic"/><circle class="c" cx="109" r="6.500" fill="#777"/></g>
<text x="123" y="93" font-size="12" fill="#111" textLength="57" lengthAdjust="spacingAndGlyphs">DIM_INT 20</text>
<use href="#dn" x="320" y="79.500"/>

<!-- Dropdown -->
<rect x="41" y="699" width="298" height="4" fill="#999" opacity=".6"/>
<rect x="37.500" y="98.500" width="299" height="600" fill="#fff" stroke="#8a8a8a"/>
<rect x="320" y="99" width="16" height="599" fill="#f0f0f0"/>
<path d="M325 110H331L328 106ZM325 689H331L328 693Z" fill="#555"/>
<rect x="320.500" y="463" width="14" height="63" rx="2" fill="#f6f6f6" stroke="#999"/>
<path d="M324 491H331M324 494H331M324 497H331" stroke="#777"/>
<rect x="38" y="199.500" width="281" height="19.500" fill="#3d95ee"/>
<rect x="124.500" y="200" width="194" height="18.500" fill="none" stroke="#d8852a" stroke-dasharray="1 1" stroke-width=".8"/>

<g font-size="12" fill="#111">
<g transform="translate(0,109.500)"><use href="#of"/><use href="#ic"/><circle class="c" cx="109" r="6.500" fill="#777"/><text x="127" y="4" textLength="47" lengthAdjust="spacingAndGlyphs">DIM_ 200</text></g>
<g transform="translate(0,129.500)"><use href="#of"/><use href="#ic"/><circle class="c" cx="109" r="6.500" fill="#777"/><text x="127" y="4" textLength="67" lengthAdjust="spacingAndGlyphs">DIM_EXT 100</text></g>
<g transform="translate(0,149.500)"><use href="#of"/><use href="#ic"/><circle class="c" cx="109" r="6.500" fill="#777"/><text x="127" y="4" textLength="62" lengthAdjust="spacingAndGlyphs">DIM_EXT 50</text></g>
<g transform="translate(0,169.500)"><use href="#of"/><use href="#ic"/><circle class="c" cx="109" r="6.500" fill="#777"/><text x="127" y="4" textLength="66" lengthAdjust="spacingAndGlyphs">DIM_INT 100</text></g>
<g transform="translate(0,189.500)"><use href="#of"/><use href="#ic"/><circle class="c" cx="109" r="6.500" fill="#777"/><text x="127" y="4" textLength="61" lengthAdjust="spacingAndGlyphs">DIM_INT 20</text></g>
<g transform="translate(0,209.500)"><g opacity=".55"><use href="#of"/><use href="#ic"/><circle class="c" cx="109" r="6.500" fill="#777"/></g><text x="127" y="4" fill="#fff" textLength="61" lengthAdjust="spacingAndGlyphs">DIM_INT 50</text></g>
<g transform="translate(0,229.500)"><use href="#of"/><use href="#ic"/><circle class="c" cx="109" r="6.500" fill="#777"/><text x="127" y="4" textLength="57.500" lengthAdjust="spacingAndGlyphs">DIM_NIVEL</text></g>
<g transform="translate(0,249.500)"><use href="#on"/><use href="#ic"/><circle class="c" cx="109" r="6.500" fill="#fff"/><text x="127" y="4" textLength="51" lengthAdjust="spacingAndGlyphs">Defpoints</text></g>
<g transform="translate(0,269.500)"><use href="#of"/><use href="#ic"/><circle class="c" cx="109" r="6.500" fill="#aaa"/><text x="127" y="4" textLength="97.500" lengthAdjust="spacingAndGlyphs">ELEVATIE_HASURA</text></g>
<g transform="translate(0,289.500)"><use href="#on"/><use href="#ic"/><circle class="c" cx="109" r="6.500" fill="#0ff"/><text x="127" y="4" textLength="51" lengthAdjust="spacingAndGlyphs">FERESTRE</text></g>
<g transform="translate(0,309.500)"><use href="#on"/><use href="#ic"/><circle class="c" cx="109" r="6.500" fill="#777"/><text x="127" y="4" textLength="80" lengthAdjust="spacingAndGlyphs">FERESTRE-COD</text></g>
<g transform="translate(0,329.500)"><use href="#on"/><use href="#ic"/><circle class="c" cx="109" r="6.500" fill="#ff8000"/><text x="127" y="4" textLength="97" lengthAdjust="spacingAndGlyphs">FINISAJ_EXTERIOR</text></g>
<g transform="translate(0,349.500)"><use href="#on"/><use href="#ic"/><circle class="c" cx="109" r="6.500" fill="#ff8000"/><text x="127" y="4" textLength="96" lengthAdjust="spacingAndGlyphs">FINISAJ_INTERIOR</text></g>
<g transform="translate(0,369.500)"><use href="#on"/><use href="#ic"/><circle class="c" cx="109" r="6.500" fill="#ffdd80"/><text x="127" y="4" textLength="38" lengthAdjust="spacingAndGlyphs">GHENE</text></g>
<g transform="translate(0,389.500)"><use href="#on"/><use href="#ic"/><circle class="c" cx="109" r="6.500" fill="#ffdd80"/><text x="127" y="4" textLength="70.500" lengthAdjust="spacingAndGlyphs">GIPSCARTON</text></g>
<g transform="translate(0,409.500)"><use href="#on"/><use href="#ic"/><circle class="c" cx="109" r="6.500" fill="#aaa"/><text x="127" y="4" textLength="37" lengthAdjust="spacingAndGlyphs">GRINZI</text></g>
<g transform="translate(0,429.500)"><use href="#of"/><use href="#ic"/><circle class="c" cx="109" r="6.500" fill="#555"/><text x="127" y="4" textLength="41" lengthAdjust="spacingAndGlyphs">HASURI</text></g>
<g transform="translate(0,449.500)"><use href="#on"/><use href="#ic"/><circle class="c" cx="109" r="6.500" fill="#ffb000"/><text x="127" y="4" textLength="27" lengthAdjust="spacingAndGlyphs">HELP</text></g>
<g transform="translate(0,469.500)"><use href="#on"/><use href="#ic"/><circle class="c" cx="109" r="6.500" fill="#fff"/><text x="127" y="4" textLength="83.500" lengthAdjust="spacingAndGlyphs">HIDROIZOLATIE</text></g>
<g transform="translate(0,489.500)"><use href="#on"/><use href="#ic"/><circle class="c" cx="109" r="6.500" fill="#777"/><text x="127" y="4" textLength="51" lengthAdjust="spacingAndGlyphs">INDICATII</text></g>
<g transform="translate(0,509.500)"><use href="#on"/><use href="#ic"/><circle class="c" cx="109" r="6.500" fill="#ff4000"/><text x="127" y="4" textLength="96" lengthAdjust="spacingAndGlyphs">INTRERUPATOARE</text></g>
<g transform="translate(0,529.500)"><use href="#on"/><use href="#ic"/><circle class="c" cx="109" r="6.500" fill="#0f0"/><text x="127" y="4" textLength="21" lengthAdjust="spacingAndGlyphs">LIFT</text></g>
<g transform="translate(0,549.500)"><use href="#on"/><use href="#ic"/><circle class="c" cx="109" r="6.500" fill="#ff80ff"/><text x="127" y="4" textLength="76" lengthAdjust="spacingAndGlyphs">LIMITA-TEREN</text></g>
<g transform="translate(0,569.500)"><use href="#on"/><use href="#ic"/><circle class="c" cx="109" r="6.500" fill="#777"/><text x="127" y="4" textLength="72" lengthAdjust="spacingAndGlyphs">LUMINI_TYPE</text></g>
<g transform="translate(0,589.500)"><use href="#on"/><use href="#ic"/><circle class="c" cx="109" r="6.500" fill="#aaa"/><text x="127" y="4" textLength="121" lengthAdjust="spacingAndGlyphs">MARCA_DESFASURATE</text></g>
<g transform="translate(0,609.500)"><use href="#on"/><use href="#ic"/><circle class="c" cx="109" r="6.500" fill="#aaa"/><text x="127" y="4" textLength="89" lengthAdjust="spacingAndGlyphs">MARCI_CAMERA</text></g>
<g transform="translate(0,629.500)"><use href="#on"/><use href="#ic"/><circle class="c" cx="109" r="6.500" fill="#aaa"/><text x="127" y="4" textLength="68" lengthAdjust="spacingAndGlyphs">MARCI_DESF</text></g>
<g transform="translate(0,649.500)"><use href="#on"/><use href="#ic"/><circle class="c" cx="109" r="6.500" fill="#f0f"/><text x="127" y="4" textLength="52" lengthAdjust="spacingAndGlyphs">MOBILIER</text></g>
<g transform="translate(0,669.500)"><use href="#on"/><use href="#ic"/><circle class="c" cx="109" r="6.500" fill="#f0f"/><text x="127" y="4" textLength="115" lengthAdjust="spacingAndGlyphs">MOBILIER_ACCESORII</text></g>
<g transform="translate(0,689.500)"><use href="#on"/><use href="#ic"/><circle class="c" cx="109" r="6.500" fill="#777"/><text x="127" y="4" textLength="79" lengthAdjust="spacingAndGlyphs">MOBILIER_DIM</text></g>
</g>
</svg>
</body></html>
